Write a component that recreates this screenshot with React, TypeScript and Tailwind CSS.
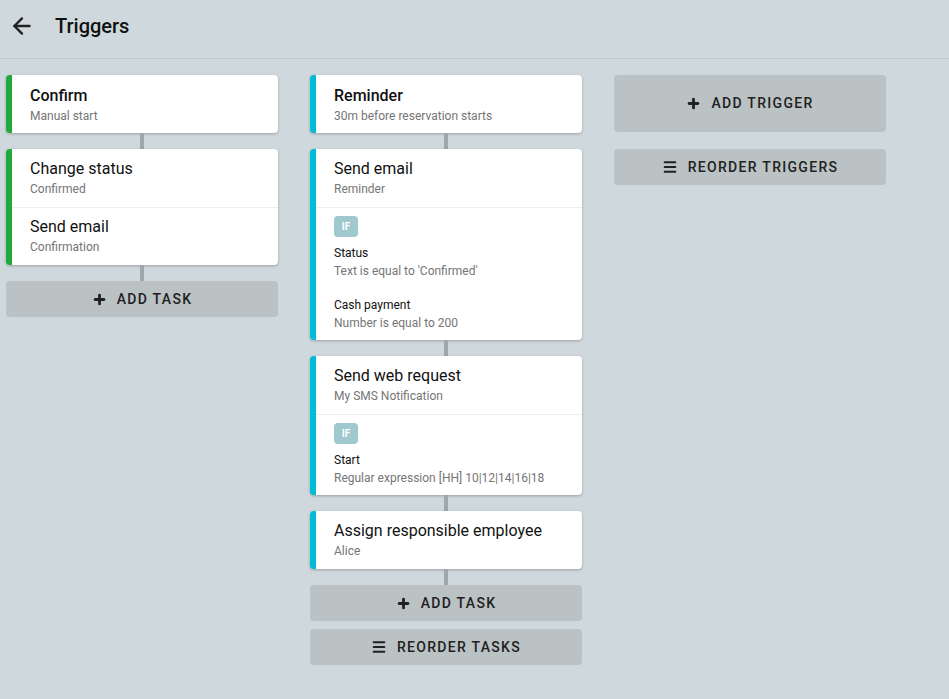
import { ArrowLeft, Plus, Menu } from 'lucide-react';

type Cond = { label: string; text: string };
type Task = { title: string; sub: string; conds?: Cond[] };

const TRIGGERS: { title: string; sub: string; color: string; groups: Task[][] }[] = [
  {
    title: 'Confirm',
    sub: 'Manual start',
    color: 'border-[#1faa3b]',
    groups: [[
      { title: 'Change status', sub: 'Confirmed' },
      { title: 'Send email', sub: 'Confirmation' },
    ]],
  },
  {
    title: 'Reminder',
    sub: '30m before reservation starts',
    color: 'border-[#00bcd4]',
    groups: [
      [{
        title: 'Send email', sub: 'Reminder',
        conds: [
          { label: 'Status', text: "Text is equal to 'Confirmed'" },
          { label: 'Cash payment', text: 'Number is equal to 200' },
        ],
      }],
      [{
        title: 'Send web request', sub: 'My SMS Notification',
        conds: [{ label: 'Start', text: 'Regular expression [HH] 10|12|14|16|18' }],
      }],
      [{ title: 'Assign responsible employee', sub: 'Alice' }],
    ],
  },
];

function Connector() {
  return <div className="mx-auto h-[16px] w-[4px] bg-[#9ea7aa]" />;
}

function GreyButton({ icon, label, tall }: { icon: 'plus' | 'menu'; label: string; tall?: boolean }) {
  return (
    <button className={`w-full flex items-center justify-center gap-2.5 rounded bg-[#bbc2c4] text-[14px] font-medium tracking-[1.3px] text-[#212121] ${tall ? 'h-[57px]' : 'h-[36px]'}`}>
      {icon === 'plus'
        ? <Plus className="w-[15px] h-[15px]" strokeWidth={4.5} />
        : <Menu className="w-[16px] h-[16px]" strokeWidth={3} />}
      {label}
    </button>
  );
}

function TaskBlock({ task, first }: { task: Task; first: boolean }) {
  return (
    <div className={first ? '' : 'border-t border-[#eeeeee]'}>
      <div className={`pl-[18px] pr-4 ${first ? 'h-[58px] pt-[10px]' : 'h-[57px] pt-[9px]'}`}>
        <p className="text-[16px] leading-5 text-[#111]">{task.title}</p>
        <p className="text-[12px] leading-4 mt-[2px] text-[#757575]">{task.sub}</p>
      </div>
      {task.conds && (
        <div className="border-t border-[#eeeeee] pl-[18px] pr-4 pt-[8px] pb-[8px]">
          <div className="flex h-[21px] w-[24px] items-center justify-center rounded bg-[#9fc8cf] text-[10px] font-bold text-white">IF</div>
          {task.conds.map((c, i) => (
            <div key={c.label} className={i === 0 ? 'mt-[7px]' : 'mt-[16px]'}>
              <p className="text-[12px] leading-[18px] text-[#111]">{c.label}</p>
              <p className="text-[12px] leading-[18px] text-[#757575]">{c.text}</p>
            </div>
          ))}
        </div>
      )}
    </div>
  );
}

export default function App() {
  return (
    <div className="min-h-[699px] bg-[#cfd8dc] text-[#111]" style={{ fontFamily: 'Roboto, "Liberation Sans", sans-serif' }}>
      {/* Header */}
      <header className="h-[59px] flex items-start pt-[13px] border-b border-[#bec8cc]">
        <button className="ml-[9px] w-[26px] h-[26px] flex items-center justify-center text-[#212121]">
          <ArrowLeft className="w-[26px] h-[26px]" strokeWidth={2.2} />
        </button>
        <h1 className="ml-[20px] mt-[1px] text-[20px] leading-6 font-medium">Triggers</h1>
      </header>

      {/* Columns */}
      <div className="flex items-start gap-8 pl-[6px] pt-[16px]">
        {TRIGGERS.map((t) => (
          <div key={t.title} className="w-[272px] flex flex-col">
            <div className={`bg-white rounded border-l-[6px] ${t.color} shadow-[0_1px_3px_rgba(0,0,0,0.25)] pl-[18px] pt-[11px] h-[58px]`}>
              <p className="text-[16px] leading-5 font-medium">{t.title}</p>
              <p className="text-[12px] leading-4 mt-[2px] text-[#757575]">{t.sub}</p>
            </div>
            {t.groups.map((g, gi) => (
              <div key={gi}>
                <Connector />
                <div className={`bg-white rounded border-l-[6px] ${t.color} shadow-[0_1px_3px_rgba(0,0,0,0.25)] overflow-hidden`}>
                  {g.map((task, i) => <TaskBlock key={task.title} task={task} first={i === 0} />)}
                </div>
              </div>
            ))}
            <Connector />
            <GreyButton icon="plus" label="ADD TASK" />
            {t.groups.length > 1 && (
              <div className="mt-2">
                <GreyButton icon="menu" label="REORDER TASKS" />
              </div>
            )}
          </div>
        ))}

        <div className="w-[272px] flex flex-col gap-[17px]">
          <GreyButton icon="plus" label="ADD TRIGGER" tall />
          <GreyButton icon="menu" label="REORDER TRIGGERS" />
        </div>
      </div>
    </div>
  );
}
